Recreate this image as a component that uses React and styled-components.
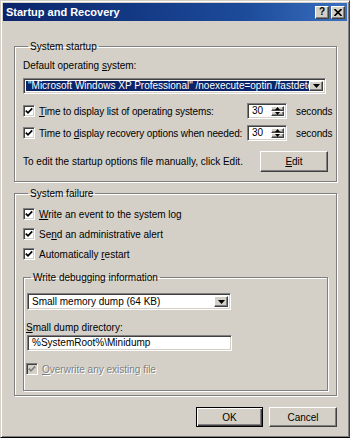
import React from "react";
import styled, { createGlobalStyle, css } from "styled-components";

const GlobalStyle = createGlobalStyle`
  html, body {
    margin: 0;
    padding: 0;
    background: #d4d0c8;
  }
  body {
    font-family: "Liberation Sans", Arial, sans-serif;
    font-size: 10px;
    color: #000;
  }
`;

const face = "#d4d0c8";

const raised = css`
  border: 1px solid;
  border-color: #fff #404040 #404040 #fff;
  box-shadow: inset -1px -1px #808080, inset 1px 1px ${face};
`;

const sunken = css`
  border: 1px solid;
  border-color: #808080 #fff #fff #808080;
  box-shadow: inset 1px 1px #404040, inset -1px -1px ${face};
`;

const Window = styled.div`
  box-sizing: border-box;
  width: 350px;
  height: 438px;
  background: ${face};
  border: 1px solid;
  border-color: ${face} #404040 #000 ${face};
  box-shadow: inset 1px 1px #fff, inset -1px -1px #808080;
  padding: 2px;
  display: flex;
  flex-direction: column;
`;

const TitleBar = styled.div`
  height: 18px;
  flex: none;
  display: flex;
  align-items: center;
  justify-content: space-between;
  padding: 0 2px 0 3px;
  background: linear-gradient(to right, #0a246a, #1c4b9a 70%, #3a6fc0);
`;

const Title = styled.span`
  color: #fff;
  font-weight: bold;
  font-size: 11px;
`;

const Caption = styled.div`
  display: flex;
  gap: 2px;
`;

const CaptionButton = styled.div`
  ${raised};
  box-sizing: border-box;
  width: 14px;
  height: 13px;
  background: ${face};
  display: flex;
  align-items: center;
  justify-content: center;
  font-weight: bold;
  font-size: 10px;
  line-height: 1;
`;

const Body = styled.div`
  flex: 1;
  display: flex;
  flex-direction: column;
  padding: 19px 10px 0 11px;
`;

const Group = styled.fieldset`
  margin: ${(p) => (p.$inner ? "9px 0 0 0" : "0")};
  padding: ${(p) => p.$pad};
  border: 1px solid #808080;
  box-shadow: inset 1px 1px #fff, 1px 1px #fff;
  min-width: 0;
  & + & {
    margin-top: 5px;
  }
`;

const Legend = styled.legend`
  padding: 0 2px;
  margin-left: 5px;
  line-height: 13px;
`;

const Label = styled.div`
  line-height: 13px;
  margin-top: ${(p) => p.$top || 0}px;
  white-space: nowrap;
`;

const Select = styled.div`
  ${sunken};
  box-sizing: border-box;
  height: ${(p) => p.$h}px;
  margin: ${(p) => p.$m};
  background: #fff;
  display: flex;
  align-items: stretch;
  padding: 2px;
  overflow: hidden;
`;

const SelectText = styled.div`
  flex: 1;
  min-width: 0;
  overflow: hidden;
  white-space: nowrap;
  line-height: ${(p) => p.$lh}px;
  padding: 0 2px;
  background: ${(p) => (p.$selected ? "#0a246a" : "transparent")};
  color: ${(p) => (p.$selected ? "#fff" : "#000")};
`;

const ArrowButton = styled.div`
  ${raised};
  box-sizing: border-box;
  width: 14px;
  flex: none;
  background: ${face};
  display: flex;
  align-items: center;
  justify-content: center;
`;

const Row = styled.div`
  display: grid;
  grid-template-columns: minmax(0, 1fr) 40px 35px;
  column-gap: 9px;
  align-items: center;
  height: 16px;
  margin-top: ${(p) => p.$top}px;
  letter-spacing: -0.12px;
`;

const CheckRow = styled.label`
  display: flex;
  align-items: center;
  gap: 3px;
  height: 16px;
  margin-top: ${(p) => p.$top || 0}px;
  white-space: nowrap;
  color: ${(p) => (p.$disabled ? "#808080" : "#000")};
  text-shadow: ${(p) => (p.$disabled ? "1px 1px #fff" : "none")};
`;

const Box = styled.span`
  ${sunken};
  box-sizing: border-box;
  width: 12px;
  height: 12px;
  flex: none;
  margin-right: 1px;
  background: ${(p) => (p.$disabled ? face : "#fff")};
  display: flex;
  align-items: center;
  justify-content: center;
`;

const Spin = styled.div`
  ${sunken};
  box-sizing: border-box;
  height: 16px;
  background: #fff;
  display: flex;
  padding: 2px;
`;

const SpinValue = styled.div`
  flex: 1;
  line-height: 10px;
  padding-left: 2px;
`;

const SpinButtons = styled.div`
  width: 13px;
  display: flex;
  flex-direction: column;
`;

const SpinHalf = styled.div`
  ${raised};
  box-sizing: border-box;
  flex: 1;
  background: ${face};
  display: flex;
  align-items: center;
  justify-content: center;
`;

const EditRow = styled.div`
  display: flex;
  align-items: center;
  justify-content: space-between;
  margin: 10px 3px 0 0;
`;

const Button = styled.div`
  ${raised};
  box-sizing: border-box;
  width: ${(p) => p.$w}px;
  height: ${(p) => p.$h}px;
  background: ${face};
  display: flex;
  align-items: center;
  justify-content: center;
  ${(p) =>
    p.$default &&
    css`
      border-color: #000;
      box-shadow: inset 1px 1px #fff, inset -1px -1px #404040,
        inset -2px -2px #808080;
    `}
`;

const Input = styled.div`
  ${sunken};
  box-sizing: border-box;
  height: 16px;
  margin: 1px 93px 0 1px;
  background: #fff;
  line-height: 12px;
  padding: 1px 4px;
  white-space: nowrap;
`;

const Footer = styled.div`
  display: flex;
  justify-content: flex-end;
  gap: 6px;
  margin-top: 11px;
`;

const U = styled.span`
  text-decoration: underline;
`;

const Down = () => (
  <svg width="7" height="4" viewBox="0 0 7 4">
    <path d="M0 0 H7 L3.5 4 Z" fill="#000" />
  </svg>
);

const Tri = ({ up }) => (
  <svg width="5" height="3" viewBox="0 0 5 3">
    <path d={up ? "M0 3 H5 L2.5 0 Z" : "M0 0 H5 L2.5 3 Z"} fill="#000" />
  </svg>
);

const Check = ({ disabled, label }) => (
  <>
    <Box $disabled={disabled}>
      <svg width="8" height="8" viewBox="0 0 8 8">
        <path
          d="M0.8 3.6 L3 5.8 L7.2 1.4"
          fill="none"
          stroke={disabled ? "#808080" : "#000"}
          strokeWidth="1.7"
        />
      </svg>
    </Box>
    {label}
  </>
);

const SpinBox = ({ value }) => (
  <Spin>
    <SpinValue>{value}</SpinValue>
    <SpinButtons>
      <SpinHalf>
        <Tri up />
      </SpinHalf>
      <SpinHalf>
        <Tri />
      </SpinHalf>
    </SpinButtons>
  </Spin>
);

const App = () => {
  return (
    <>
      <GlobalStyle />
      <Window>
        <TitleBar>
          <Title>Startup and Recovery</Title>
          <Caption>
            <CaptionButton>?</CaptionButton>
            <CaptionButton>
              <svg width="8" height="7" viewBox="0 0 8 7">
                <path d="M0.5 0 L7.5 7 M7.5 0 L0.5 7" stroke="#000" strokeWidth="1.6" />
              </svg>
            </CaptionButton>
          </Caption>
        </TitleBar>

        <Body>
          <Group $pad="0 5px 9px 8px">
            <Legend>System startup</Legend>
            <Label $top={6}>
              Default operating <U>s</U>ystem:
            </Label>
            <Select $h={16} $m="6px 5px 0 0">
              <SelectText $selected $lh={10}>
                "Microsoft Windows XP Professional" /noexecute=optin /fastdetect
              </SelectText>
              <ArrowButton>
                <Down />
              </ArrowButton>
            </Select>
            <Row $top={9}>
              <CheckRow>
                <Check
                  label={
                    <span>
                      <U>T</U>ime to display list of operating systems:
                    </span>
                  }
                />
              </CheckRow>
              <SpinBox value="30" />
              <span>seconds</span>
            </Row>
            <Row $top={6}>
              <CheckRow>
                <Check
                  label={
                    <span>
                      Time to <U>d</U>isplay recovery options when needed:
                    </span>
                  }
                />
              </CheckRow>
              <SpinBox value="30" />
              <span>seconds</span>
            </Row>
            <EditRow>
              <span>To edit the startup options file manually, click Edit.</span>
              <Button $w={68} $h={21}>
                <span>
                  <U>E</U>dit
                </span>
              </Button>
            </EditRow>
          </Group>

          <Group $pad="0 8px 4px 8px">
            <Legend>System failure</Legend>
            <CheckRow $top={6}>
              <Check
                label={
                  <span>
                    <U>W</U>rite an event to the system log
                  </span>
                }
              />
            </CheckRow>
            <CheckRow $top={4}>
              <Check
                label={
                  <span>
                    Se<U>n</U>d an administrative alert
                  </span>
                }
              />
            </CheckRow>
            <CheckRow $top={4}>
              <Check
                label={
                  <span>
                    Automatically <U>r</U>estart
                  </span>
                }
              />
            </CheckRow>

            <Group $inner $pad="0 2px 13px 2px">
              <Legend>Write debugging information</Legend>
              <Select $h={17} $m="9px 94px 0 1px">
                <SelectText $lh={11}>Small memory dump (64 KB)</SelectText>
                <ArrowButton>
                  <Down />
                </ArrowButton>
              </Select>
              <Label $top={11}>
                <U>S</U>mall dump directory:
              </Label>
              <Input>%SystemRoot%\Minidump</Input>
              <CheckRow $top={10} $disabled>
                <Check
                  disabled
                  label={
                    <span>
                      <U>O</U>verwrite any existing file
                    </span>
                  }
                />
              </CheckRow>
            </Group>
          </Group>

          <Footer>
            <Button $w={67} $h={20} $default>
              OK
            </Button>
            <Button $w={68} $h={20}>
              Cancel
            </Button>
          </Footer>
        </Body>
      </Window>
    </>
  );
};

export default App;
